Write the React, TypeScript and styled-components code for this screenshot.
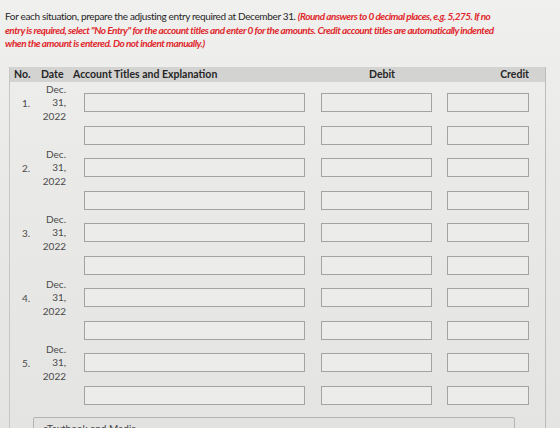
import React from "react";
import styled, { createGlobalStyle } from "styled-components";

const Global = createGlobalStyle`
  html, body { margin: 0; padding: 0; }
  body {
    width: 560px;
    height: 428px;
    overflow: hidden;
    background: #e6e6e4;
    font-family: Lato, "Open Sans", "Liberation Sans", sans-serif;
  }
`;

const Page = styled.div`
  display: flex;
  flex-direction: column;
  height: 428px;
  overflow: hidden;
  background: linear-gradient(180deg, #f0f0ee 0%, #eaeae8 35%, #e4e4e2 100%);
`;

const Instructions = styled.p`
  margin: 0;
  padding: 10px 0 0 5px;
  font-size: 10px;
  line-height: 13.5px;
  color: #262626;
  letter-spacing: -0.35px;
  white-space: nowrap;
`;

const Note = styled.em`
  color: #e0282c;
  font-weight: 700;
  letter-spacing: -0.5px;
`;

const Panel = styled.section`
  margin: 16px 0 0 9px;
  width: 535px;
  flex: 1;
  border-left: 1px solid #c6c6c4;
  border-right: 1px solid #bcbcba;
`;

const HeaderBar = styled.div`
  display: grid;
  grid-template-columns: 27px 32px 250px 126px 1fr;
  align-items: center;
  height: 15px;
  background: #d3d3d1;
  font-size: 10.5px;
  font-weight: 700;
  color: #262626;
`;

const HeadCell = styled.div<{ $align?: "left" | "center" | "right" }>`
  text-align: ${(p) => p.$align ?? "left"};
  padding: ${(p) => (p.$align === "right" ? "0 16px 0 0" : p.$align === "center" ? "0" : "0 0 0 4px")};
  white-space: nowrap;
`;

const Entries = styled.div`
  display: flex;
  flex-direction: column;
  padding-top: 5px;
`;

const Entry = styled.div`
  display: grid;
  grid-template-columns: 24px 33px 239px 127px 97px;
  grid-template-rows: 32.5px 32.5px;
  font-size: 10px;
  color: #4a4a4a;
`;

const Num = styled.div`
  grid-row: 1;
  grid-column: 1;
  align-self: center;
  padding-left: 12px;
`;

const DateCell = styled.div`
  grid-row: 1;
  grid-column: 2;
  display: flex;
  flex-direction: column;
  justify-content: center;
  align-items: flex-end;
  line-height: 13.5px;
  padding-right: 1px;
`;

const Field = styled.input<{ $row: number; $col: number; $width: number; $offset: number }>`
  grid-row: ${(p) => p.$row};
  grid-column: ${(p) => p.$col};
  align-self: center;
  box-sizing: border-box;
  width: ${(p) => p.$width}px;
  height: 19px;
  margin: 0 0 0 ${(p) => p.$offset}px;
  padding: 0 4px;
  border: 1.5px solid #a3a3a1;
  border-radius: 0;
  background: #ececea;
  font: inherit;
  outline: none;
`;

const MediaBox = styled.div`
  margin: 5px 0 0 23px;
  width: 482px;
  height: 30px;
  box-sizing: border-box;
  border: 1px solid #b4b4b2;
  border-radius: 2px;
  background: #e2e2e0;
  padding: 4px 9px;
  font-size: 10px;
  color: #444;
`;

const columns = [
  { col: 3, width: 221, offset: 17 },
  { col: 4, width: 111, offset: 15 },
  { col: 5, width: 82, offset: 14 },
];

const entries = ["1.", "2.", "3.", "4.", "5."];

export default function App() {
  return (
    <Page>
      <Global />
      <Instructions>
        For each situation, prepare the adjusting entry required at December 31.{" "}
        <Note>(Round answers to 0 decimal places, e.g. 5,275. If no</Note>
        <br />
        <Note>
          entry is required, select "No Entry" for the account titles and enter 0 for the amounts. Credit account
          titles are automatically indented
        </Note>
        <br />
        <Note>when the amount is entered. Do not indent manually.)</Note>
      </Instructions>
      <Panel>
        <HeaderBar>
          <HeadCell>No.</HeadCell>
          <HeadCell>Date</HeadCell>
          <HeadCell>Account Titles and Explanation</HeadCell>
          <HeadCell $align="center">Debit</HeadCell>
          <HeadCell $align="right">Credit</HeadCell>
        </HeaderBar>
        <Entries>
          {entries.map((n) => (
            <Entry key={n}>
              <Num>{n}</Num>
              <DateCell>
                <span>Dec.</span>
                <span>31,</span>
                <span>2022</span>
              </DateCell>
              {[1, 2].map((row) =>
                columns.map((c) => (
                  <Field
                    key={`${row}-${c.col}`}
                    type="text"
                    $row={row}
                    $col={c.col}
                    $width={c.width}
                    $offset={c.offset}
                  />
                ))
              )}
            </Entry>
          ))}
        </Entries>
        <MediaBox>eTextbook and Media</MediaBox>
      </Panel>
    </Page>
  );
}
